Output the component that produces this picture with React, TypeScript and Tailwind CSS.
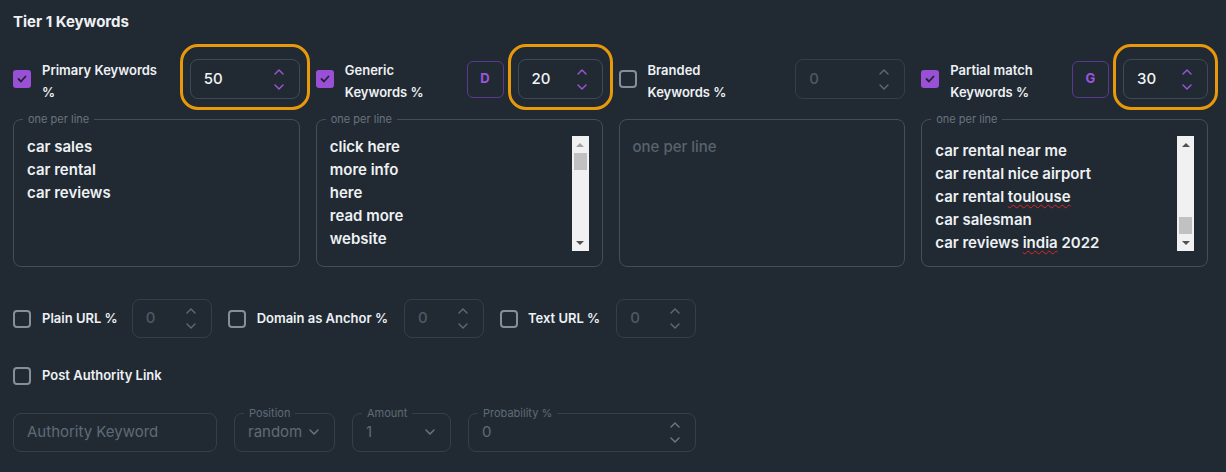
import { ReactNode } from 'react';

const Chev = ({ up }: { up?: boolean }) => (
  <svg width="10" height="6" viewBox="0 0 10 6" fill="none" stroke="currentColor" strokeWidth="1.4" strokeLinecap="round" strokeLinejoin="round">
    <polyline points={up ? '1,5 5,1 9,5' : '1,1 5,5 9,1'} />
  </svg>
);

function Checkbox({ checked }: { checked?: boolean }) {
  if (checked) {
    return (
      <div className="flex h-[18px] w-[18px] shrink-0 items-center justify-center rounded-[3px] bg-[#9a50d6]">
        <svg width="10" height="8" viewBox="0 0 10 8" fill="none" stroke="#1f2530" strokeWidth="1.8" strokeLinecap="round" strokeLinejoin="round">
          <polyline points="1.5,4 4,6.5 8.5,1.5" />
        </svg>
      </div>
    );
  }
  return <div className="h-[18px] w-[18px] shrink-0 rounded-[4px] border-2 border-[#858f99]" />;
}

function NumberInput({ value, w, active, ring, h = 'h-[40px]' }: { value: string; w: string; active?: boolean; ring?: boolean; h?: string }) {
  return (
    <div className={`relative flex shrink-0 items-center rounded-lg border ${active ? 'border-[#3f4a55]' : 'border-[#353f49]'} ${w} ${h} pl-[13px] pr-[15px]`}>
      <span className={`flex-1 text-[15px] font-medium ${active ? 'text-[#f1f3f5]' : 'text-[#4e5965]'}`}>{value}</span>
      <div className={`flex flex-col gap-[9px] ${active ? 'text-[#9b57dc]' : 'text-[#5f6a75]'}`}>
        <Chev up />
        <Chev />
      </div>
      {ring && <div className="pointer-events-none absolute -bottom-[12px] -left-[11px] -right-[11px] -top-[16px] rounded-[18px] border-[3px] border-[#e8990b]" />}
    </div>
  );
}

function LetterBtn({ children }: { children: ReactNode }) {
  return (
    <div className="mr-[14px] flex h-[37px] w-[37px] shrink-0 items-center justify-center rounded-md border border-[#5c3990] text-[13px] font-bold text-[#9d55e0]">
      {children}
    </div>
  );
}

function Scrollbar({ atBottom }: { atBottom?: boolean }) {
  return (
    <div className="mr-[13px] mt-[16px] flex h-[115px] w-[17px] shrink-0 flex-col bg-[#f1f1f1]">
      <div className="flex h-[17px] items-center justify-center">
        <div className={`h-0 w-0 border-x-[4px] border-b-[4px] border-x-transparent ${atBottom ? 'border-b-[#505050]' : 'border-b-[#a3a3a3]'}`} />
      </div>
      <div className={`flex flex-1 flex-col ${atBottom ? 'justify-end' : 'justify-start'}`}>
        <div className="mx-[2px] h-[17px] bg-[#c1c1c1]" />
      </div>
      <div className="flex h-[17px] items-center justify-center">
        <div className="h-0 w-0 border-x-[4px] border-t-[4px] border-x-transparent border-t-[#505050]" />
      </div>
    </div>
  );
}

function TextBox({ children, legend = true, scroll, atBottom }: { children?: ReactNode; legend?: boolean; scroll?: boolean; atBottom?: boolean }) {
  return (
    <div className="relative mt-[20px] flex h-[148px] rounded-lg border border-[#434e59]">
      {legend && (
        <span className="absolute -top-[8px] left-[9px] bg-[#212a33] px-[5px] text-[11px] leading-[14px] text-[#68737e]">one per line</span>
      )}
      <div className="mt-[15px] h-[120px] flex-1 overflow-hidden pl-[13px] text-[15px] font-semibold leading-[23px] text-[#eef1f4]">
        {children}
      </div>
      {scroll && <Scrollbar atBottom={atBottom} />}
    </div>
  );
}

function Header({ label, checked, btn, value, w, active, ring }: { label: ReactNode; checked?: boolean; btn?: string; value: string; w: string; active?: boolean; ring?: boolean }) {
  return (
    <div className="flex h-[40px] items-center">
      <Checkbox checked={checked} />
      <div className="ml-[11px] mt-[4px] flex-1 text-[13px] font-semibold leading-[22px] text-[#eef1f4]">{label}</div>
      {btn && <LetterBtn>{btn}</LetterBtn>}
      <NumberInput value={value} w={w} active={active} ring={ring} />
    </div>
  );
}

const Wavy = ({ children }: { children: ReactNode }) => (
  <span className="underline decoration-[#e02424] decoration-wavy decoration-1 underline-offset-[2px]">{children}</span>
);

function Labeled({ legend, w, children }: { legend: string; w: string; children: ReactNode }) {
  return (
    <div className={`relative flex h-[39px] items-center rounded-lg border border-[#353f49] pl-[13px] pr-[15px] ${w}`}>
      <span className="absolute -top-[8px] left-[9px] bg-[#212a33] px-[5px] text-[11px] leading-[14px] text-[#5f6a75]">{legend}</span>
      {children}
    </div>
  );
}

export default function App() {
  return (
    <div className="min-h-screen bg-[#212a33] px-[13px] pt-[12px] font-['Inter','Liberation_Sans',sans-serif]">
      <h2 className="text-[15px] font-bold leading-[20px] text-[#eef1f4]">Tier 1 Keywords</h2>

      <div className="mt-[27px] grid w-[1195px] grid-cols-4 gap-x-[16px]">
        <div>
          <Header label={<>Primary Keywords<br />%</>} checked value="50" w="w-[110px]" active ring />
          <TextBox>
            <p>car sales</p>
            <p>car rental</p>
            <p>car reviews</p>
          </TextBox>
        </div>
        <div>
          <Header label={<>Generic<br />Keywords %</>} checked btn="D" value="20" w="w-[85px]" active ring />
          <TextBox scroll>
            <p>click here</p>
            <p>more info</p>
            <p>here</p>
            <p>read more</p>
            <p>website</p>
          </TextBox>
        </div>
        <div>
          <Header label={<>Branded<br />Keywords %</>} value="0" w="w-[110px]" />
          <TextBox legend={false}>
            <p className="font-medium text-[#58636e]">one per line</p>
          </TextBox>
        </div>
        <div>
          <Header label={<>Partial match<br />Keywords %</>} checked btn="G" value="30" w="w-[85px]" active ring />
          <TextBox scroll atBottom>
            <div className="pt-[4px]">
              <p>car rental near me</p>
              <p>car rental nice airport</p>
              <p>car rental <Wavy>toulouse</Wavy></p>
              <p>car salesman</p>
              <p>car reviews <Wavy>india</Wavy> 2022</p>
            </div>
          </TextBox>
        </div>
      </div>

      <div className="mt-[32px] flex items-center">
        <Checkbox />
        <span className="ml-[11px] text-[13px] font-semibold text-[#eef1f4]">Plain URL %</span>
        <div className="ml-[14px]"><NumberInput value="0" w="w-[80px]" h="h-[39px]" /></div>
        <div className="ml-[16px]"><Checkbox /></div>
        <span className="ml-[11px] text-[13px] font-semibold text-[#eef1f4]">Domain as Anchor %</span>
        <div className="ml-[16px]"><NumberInput value="0" w="w-[80px]" h="h-[39px]" /></div>
        <div className="ml-[16px]"><Checkbox /></div>
        <span className="ml-[10px] text-[13px] font-semibold text-[#eef1f4]">Text URL %</span>
        <div className="ml-[16px]"><NumberInput value="0" w="w-[80px]" h="h-[39px]" /></div>
      </div>

      <div className="mt-[28px] flex items-center">
        <Checkbox />
        <span className="ml-[11px] text-[13px] font-semibold text-[#eef1f4]">Post Authority Link</span>
      </div>

      <div className="mt-[27px] flex items-center gap-[17px]">
        <div className="flex h-[39px] w-[204px] items-center rounded-lg border border-[#353f49] pl-[13px] text-[15px] text-[#5f6a75]">Authority Keyword</div>
        <Labeled legend="Position" w="w-[101px]">
          <span className="flex-1 text-[15px] text-[#5f6a75]">random</span>
          <span className="text-[#6e7984]"><Chev /></span>
        </Labeled>
        <Labeled legend="Amount" w="w-[99px]">
          <span className="flex-1 text-[15px] text-[#5f6a75]">1</span>
          <span className="text-[#6e7984]"><Chev /></span>
        </Labeled>
        <Labeled legend="Probability %" w="w-[228px]">
          <span className="flex-1 text-[15px] text-[#5f6a75]">0</span>
          <div className="flex flex-col gap-[9px] text-[#6e7984]">
            <Chev up />
            <Chev />
          </div>
        </Labeled>
      </div>
    </div>
  );
}
